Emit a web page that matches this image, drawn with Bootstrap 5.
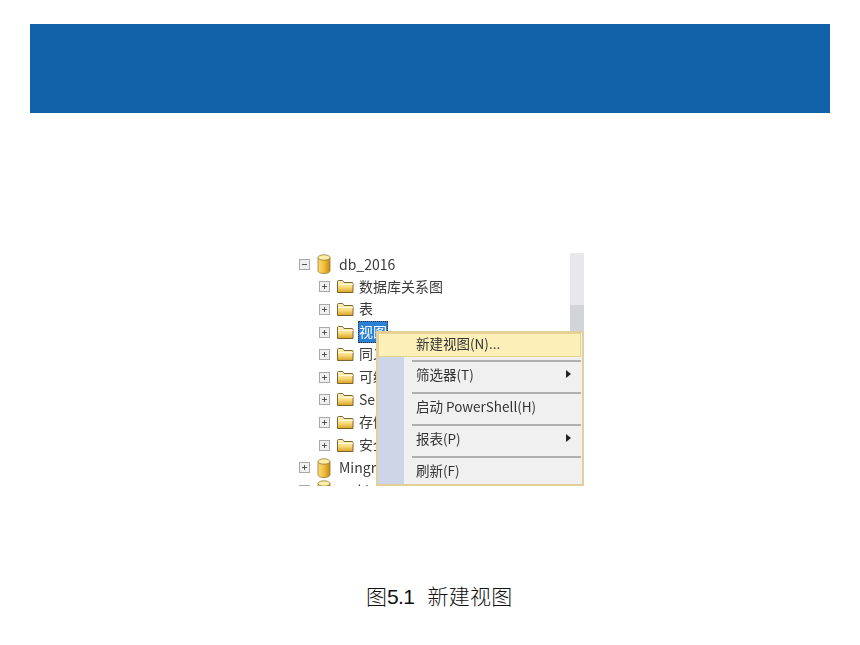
<!DOCTYPE html>
<html lang="zh">
<head>
<meta charset="utf-8">
<title>图5.1 新建视图</title>
<link href="https://cdn.jsdelivr.net/npm/bootstrap@5.3.0/dist/css/bootstrap.min.css" rel="stylesheet">
<style>
html,body{background:#fff;height:100%}
.slide{width:860px;height:645px;overflow:hidden;padding-top:24px}
.banner{height:89px;margin:0 30px;background:#1262aa}
.shot-wrap{margin-top:140px;padding-left:296px}
.shot{position:relative;width:288px;height:233px;overflow:hidden;background:#fff;font-family:"Noto Sans CJK SC","Noto Sans",sans-serif;font-size:14px;color:#3a3a3a;filter:blur(.35px)}
.tree{width:274px}
.trow{height:22.6px;line-height:22.6px;white-space:nowrap;gap:5px}
.lvl1{padding-left:3px}
.lvl2{padding-left:23px;gap:6px}
.lvl2 span{margin:0 0 2px -1px}
.trow svg{flex:none}
.ico-db{margin:0 3px 0 2px}
.lvl2 .sel{background:#2a7fd6;color:#fff;outline:1px dotted #333;outline-offset:-1px;padding:0 1px;line-height:20px;height:22px;margin:0 0 0 -2px}
.sbar{position:absolute;right:0;top:0;width:14px;height:100%;background:#e8e8ec}
.sthumb{position:absolute;left:0;right:0;top:52px;height:181px;background:#d3d4da}
.ctx{position:absolute;left:80px;top:78px;width:208px;height:155px;background:#f0f0f0;border:2px solid #e3cf9c;font-size:13.5px;color:#333;overflow:hidden}
.ctx::before{content:"";position:absolute;left:0;top:0;bottom:0;width:26px;background:#cdd5e6}
.mitem{position:relative;height:25px;line-height:21px;padding-left:38px}
.mitem.hl{height:24px;background:#fcf0b8;border:1px solid #e6d48c;line-height:19px;padding-left:37px;margin-right:1px}
.sep{position:relative;height:2px;margin:3px 1px 2px 34px;background:#b0b0b0}
.arrow{position:absolute;right:11px;top:10px;margin-top:-4px;border-left:5px solid #222;border-top:4px solid transparent;border-bottom:4px solid transparent}
.caption{margin-top:93px;padding-left:366px;font-size:21px;line-height:32px;color:#111;font-family:"Liberation Sans","Noto Sans CJK SC",sans-serif}
.cjk{font-family:"Noto Sans CJK SC",sans-serif;font-weight:300}
.num{letter-spacing:-.6px}
.cjk-tail{margin-left:13px;letter-spacing:.3px}
</style>
</head>
<body>
<svg width="0" height="0" class="d-block position-absolute">
<defs>
<linearGradient id="fg" x1="0" y1="0" x2="0" y2="1"><stop offset="0" stop-color="#fff6c8"/><stop offset=".55" stop-color="#f8dc80"/><stop offset="1" stop-color="#d9a020"/></linearGradient>
<linearGradient id="dbg" x1="0" y1="0" x2="1" y2="0"><stop offset="0" stop-color="#f9dc7a"/><stop offset=".5" stop-color="#f2bd3c"/><stop offset="1" stop-color="#c58a16"/></linearGradient>
<symbol id="folder" viewBox="0 0 18 15"><path d="M1.500 13.500V2.500q0-1 1-1h4l1.500 2h8q1 0 1 1v9z" fill="url(#fg)" stroke="#7a6630"/><path d="M2 5.500h15" stroke="#fff8d8"/></symbol>
<symbol id="db" viewBox="0 0 14 20"><path d="M1 3.500v13c0 2 2.700 3 6 3s6-1 6-3v-13z" fill="url(#dbg)" stroke="#8a6a20" stroke-width=".7"/><ellipse cx="7" cy="3.500" rx="6" ry="2.700" fill="#fdeea8" stroke="#8a6a20" stroke-width=".7"/></symbol>
<symbol id="plus" viewBox="0 0 11 11"><rect x=".5" y=".5" width="10" height="10" fill="#f0f0f0" stroke="#a8a8a8"/><path d="M3 5.500h5M5.500 3v5" stroke="#555"/></symbol>
<symbol id="minus" viewBox="0 0 11 11"><rect x=".5" y=".5" width="10" height="10" fill="#f0f0f0" stroke="#a8a8a8"/><path d="M3 5.500h5" stroke="#555"/></symbol>
</defs>
</svg>
<main class="slide">
  <div class="banner"></div>
  <div class="shot-wrap">
    <div class="shot">
      <div class="tree">
        <div class="trow lvl1 d-flex align-items-center"><svg width="11" height="11"><use href="#minus"/></svg><svg width="14" height="20" class="ico-db"><use href="#db"/></svg><span>db_2016</span></div>
        <div class="trow lvl2 d-flex align-items-center"><svg width="11" height="11"><use href="#plus"/></svg><svg width="18" height="15"><use href="#folder"/></svg><span>数据库关系图</span></div>
        <div class="trow lvl2 d-flex align-items-center"><svg width="11" height="11"><use href="#plus"/></svg><svg width="18" height="15"><use href="#folder"/></svg><span>表</span></div>
        <div class="trow lvl2 d-flex align-items-center"><svg width="11" height="11"><use href="#plus"/></svg><svg width="18" height="15"><use href="#folder"/></svg><span class="sel">视图</span></div>
        <div class="trow lvl2 d-flex align-items-center"><svg width="11" height="11"><use href="#plus"/></svg><svg width="18" height="15"><use href="#folder"/></svg><span>同义词</span></div>
        <div class="trow lvl2 d-flex align-items-center"><svg width="11" height="11"><use href="#plus"/></svg><svg width="18" height="15"><use href="#folder"/></svg><span>可编程性</span></div>
        <div class="trow lvl2 d-flex align-items-center"><svg width="11" height="11"><use href="#plus"/></svg><svg width="18" height="15"><use href="#folder"/></svg><span>Service</span></div>
        <div class="trow lvl2 d-flex align-items-center"><svg width="11" height="11"><use href="#plus"/></svg><svg width="18" height="15"><use href="#folder"/></svg><span>存储</span></div>
        <div class="trow lvl2 d-flex align-items-center"><svg width="11" height="11"><use href="#plus"/></svg><svg width="18" height="15"><use href="#folder"/></svg><span>安全性</span></div>
        <div class="trow lvl1 d-flex align-items-center"><svg width="11" height="11"><use href="#plus"/></svg><svg width="14" height="20" class="ico-db"><use href="#db"/></svg><span>Mingri</span></div>
        <div class="trow lvl1 d-flex align-items-center"><svg width="11" height="11"><use href="#minus"/></svg><svg width="14" height="20" class="ico-db"><use href="#db"/></svg><span>mrkj</span></div>
      </div>
      <div class="sbar"><div class="sthumb"></div></div>
      <div class="ctx">
        <div class="mitem hl">新建视图(N)...</div>
        <div class="sep"></div>
        <div class="mitem">筛选器(T)<span class="arrow"></span></div>
        <div class="sep"></div>
        <div class="mitem">启动 PowerShell(H)</div>
        <div class="sep"></div>
        <div class="mitem">报表(P)<span class="arrow"></span></div>
        <div class="sep"></div>
        <div class="mitem">刷新(F)</div>
      </div>
    </div>
  </div>
  <p class="caption mb-0"><span class="cjk">图</span><span class="num">5.1</span><span class="cjk cjk-tail">新建视图</span></p>
</main>
<script src="https://cdn.jsdelivr.net/npm/bootstrap@5.3.0/dist/js/bootstrap.bundle.min.js"></script>
</body>
</html>
